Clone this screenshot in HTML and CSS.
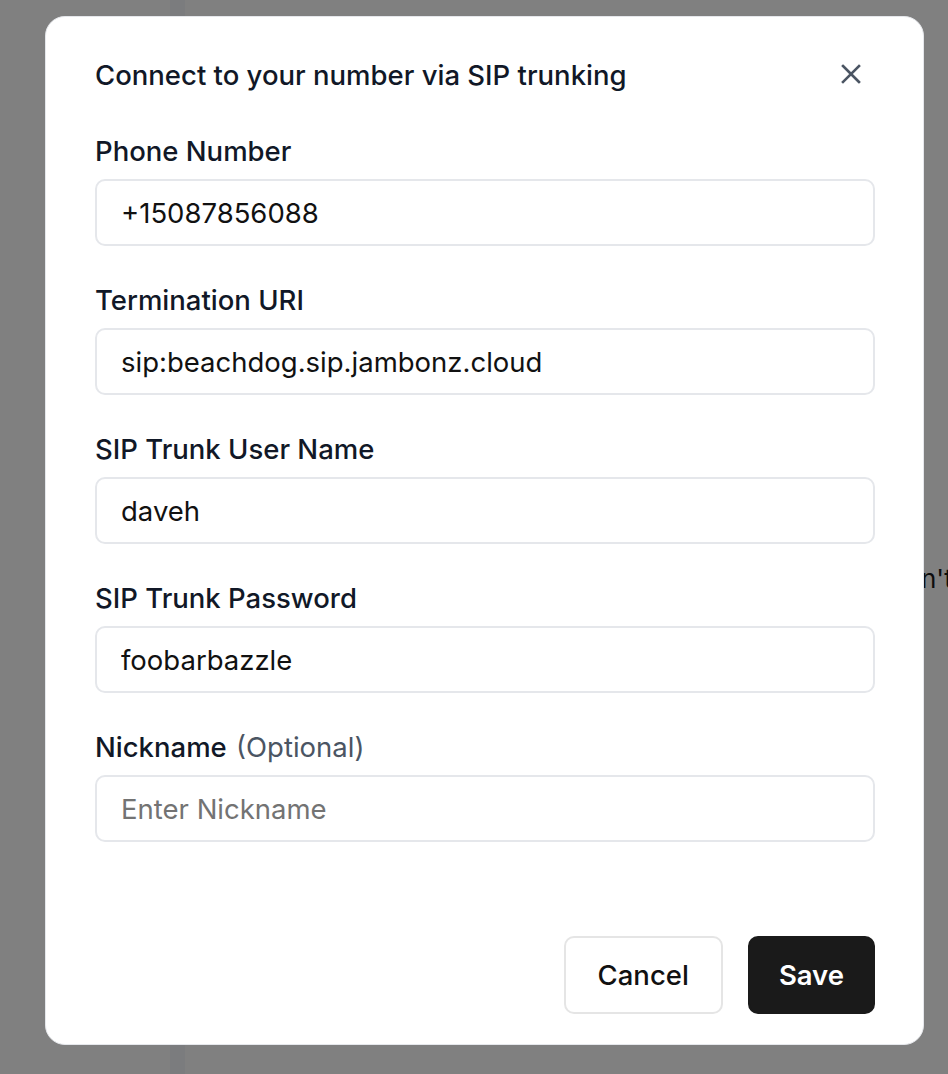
FILE: index.html
```html
<!DOCTYPE html>
<html lang="en">
<head>
<meta charset="utf-8">
<title>Connect to your number via SIP trunking</title>
<link rel="stylesheet" href="styles.css">
</head>
<body>
<div class="page">
  <div class="page-rule"></div>
  <p class="page-text">n't</p>
</div>
<div class="overlay">
  <div class="modal" role="dialog" aria-labelledby="modal-title">
    <div class="modal-header">
      <h2 id="modal-title" class="modal-title">Connect to your number via SIP trunking</h2>
      <button class="close-btn" type="button" aria-label="Close">
        <svg width="20" height="20" viewBox="0 0 20 20" fill="none" stroke="#4b5563" stroke-width="2.6" stroke-linecap="square">
          <path d="M2 2 L18 18 M18 2 L2 18"/>
        </svg>
      </button>
    </div>
    <form class="form">
      <div class="field">
        <label class="label">Phone Number</label>
        <input class="input" type="text" value="+15087856088">
      </div>
      <div class="field">
        <label class="label">Termination URI</label>
        <input class="input" type="text" value="sip:beachdog.sip.jambonz.cloud">
      </div>
      <div class="field">
        <label class="label">SIP Trunk User Name</label>
        <input class="input" type="text" value="daveh">
      </div>
      <div class="field">
        <label class="label">SIP Trunk Password</label>
        <input class="input" type="text" value="foobarbazzle">
      </div>
      <div class="field">
        <label class="label">Nickname <span class="optional">(Optional)</span></label>
        <input class="input" type="text" placeholder="Enter Nickname">
      </div>
    </form>
    <div class="actions">
      <button class="btn btn-cancel" type="button">Cancel</button>
      <button class="btn btn-save" type="button">Save</button>
    </div>
  </div>
</div>
</body>
</html>
```

FILE: styles.css
```css
* {
  box-sizing: border-box;
}

html, body {
  margin: 0;
  padding: 0;
  height: 1074px;
  overflow: hidden;
}

body {
  background: #808080;
  font-family: Inter, "Noto Sans", "Liberation Sans", sans-serif;
  color: #111827;
}

.page {
  position: relative;
  height: 1074px;
  display: flex;
}

.page-rule {
  margin-left: 170px;
  width: 15px;
  height: 100%;
  background: #7b7c7e;
}

.page-text {
  position: absolute;
  left: 921px;
  top: 561px;
  margin: 0;
  font-size: 26px;
  line-height: 36px;
  white-space: nowrap;
  color: #0d0d0d;
}

.overlay {
  position: fixed;
  inset: 0;
  display: flex;
  align-items: flex-start;
  padding: 16px 24px 0 45px;
}

.modal {
  width: 879px;
  background: #ffffff;
  border: 1px solid #e5e7eb;
  border-radius: 20px;
  padding: 40px 48px 30px 49px;
  display: flex;
  flex-direction: column;
}

.modal-header {
  display: flex;
  align-items: center;
  justify-content: space-between;
  height: 36px;
}

.modal-title {
  margin: 0;
  font-size: 27.5px;
  line-height: 36px;
  font-weight: 500;
  color: #111827;
}

.close-btn {
  width: 48px;
  height: 36px;
  padding: 0;
  margin-top: -2px;
  border: none;
  background: none;
  display: flex;
  align-items: center;
  justify-content: center;
  cursor: pointer;
}

.form {
  margin-top: 40px;
  display: flex;
  flex-direction: column;
  gap: 36px;
}

.field {
  display: flex;
  flex-direction: column;
  gap: 10px;
}

.label {
  font-size: 27.5px;
  line-height: 36px;
  font-weight: 500;
  color: #111827;
}

.optional {
  font-weight: 400;
  color: #4b5563;
  margin-left: 2px;
}

.input {
  width: 100%;
  height: 67px;
  padding: 0 24px;
  border: 2px solid #e5e7eb;
  border-radius: 10px;
  font-family: inherit;
  font-size: 27.5px;
  color: #111111;
  background: #ffffff;
  outline: none;
}

.input::placeholder {
  color: #737373;
  opacity: 1;
}

.actions {
  margin-top: 94px;
  display: flex;
  justify-content: flex-end;
  gap: 25px;
}

.btn {
  height: 78px;
  border-radius: 10px;
  font-family: inherit;
  font-size: 27.5px;
  cursor: pointer;
}

.btn-cancel {
  padding: 0 32px;
  background: #ffffff;
  border: 2px solid #e5e5e5;
  color: #111111;
  font-weight: 500;
}

.btn-save {
  padding: 0 29px;
  background: #1a1a1a;
  border: 2px solid #1a1a1a;
  color: #ffffff;
  font-weight: 600;
}
```
